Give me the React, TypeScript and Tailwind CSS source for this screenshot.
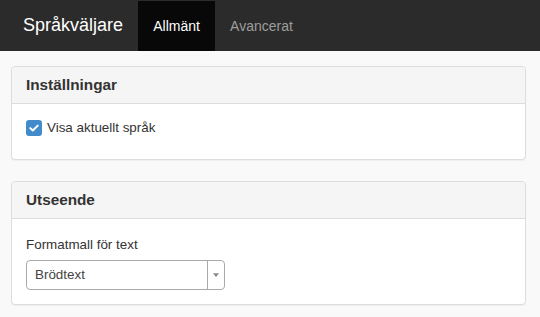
import React from 'react';

function Panel({ title, children }: { title: string; children: React.ReactNode }) {
  return (
    <div className="w-[515px] bg-white border border-[#dddddd] rounded-[4px] shadow-[0_1px_1px_rgba(0,0,0,0.05)]">
      <div className="bg-[#f5f5f5] border-b border-[#dddddd] rounded-t-[4px] px-[14px] h-[37px] flex items-center">
        <h3 className="text-[15.3px] font-bold text-[#333333]">{title}</h3>
      </div>
      <div className="px-[14px]">{children}</div>
    </div>
  );
}

export default function App() {
  return (
    <div className="min-h-[317px] bg-[#f9f9f9] font-['Liberation_Sans',Arial,sans-serif] text-[13.4px] text-[#333333]">
      {/* Navbar */}
      <nav className="bg-[#2b2b2b] h-[51px] flex items-stretch">
        <a href="#" className="text-white text-[18px] pl-[23px] pr-[15px] flex items-center">Språkväljare</a>
        <ul className="flex items-stretch pt-[1px]">
          <li className="bg-[#080808] w-[77px] flex items-center justify-center text-white text-[14px]">Allmänt</li>
          <li className="px-[15px] flex items-center text-[#9d9d9d] text-[14px]">Avancerat</li>
        </ul>
      </nav>

      <div className="pl-[11px] pt-[15px] flex flex-col gap-[21px]">
        <Panel title="Inställningar">
          <label className="flex items-center gap-[5px] h-[20px] mt-[14px] mb-[21px]">
            <span className="w-[16px] h-[16px] rounded-[3px] bg-[#428bca] flex items-center justify-center">
              <svg viewBox="0 0 16 16" className="w-[12px] h-[12px]">
                <path d="M3 8.2 L6.4 11.4 L13 4.8" fill="none" stroke="white" strokeWidth="2.6" strokeLinecap="round" strokeLinejoin="round" />
              </svg>
            </span>
            <span>Visa aktuellt språk</span>
          </label>
        </Panel>

        <Panel title="Utseende">
          <div className="pt-[16px] pb-[14px]">
            <div className="h-[20px] leading-[20px] mb-[5px]">Formatmall för text</div>
            <div className="w-[199px] h-[30px] border border-[#aaaaaa] rounded-[4px] bg-white flex items-stretch">
              <span className="flex-1 flex items-center pl-[8px] text-[#444444]">Brödtext</span>
              <span className="w-[17px] border-l border-[#aaaaaa] flex items-center justify-center">
                <svg viewBox="0 0 8 5" className="w-[6px] h-[4px]">
                  <path d="M0 0 H8 L4 5 Z" fill="#888888" />
                </svg>
              </span>
            </div>
          </div>
        </Panel>
      </div>
    </div>
  );
}
